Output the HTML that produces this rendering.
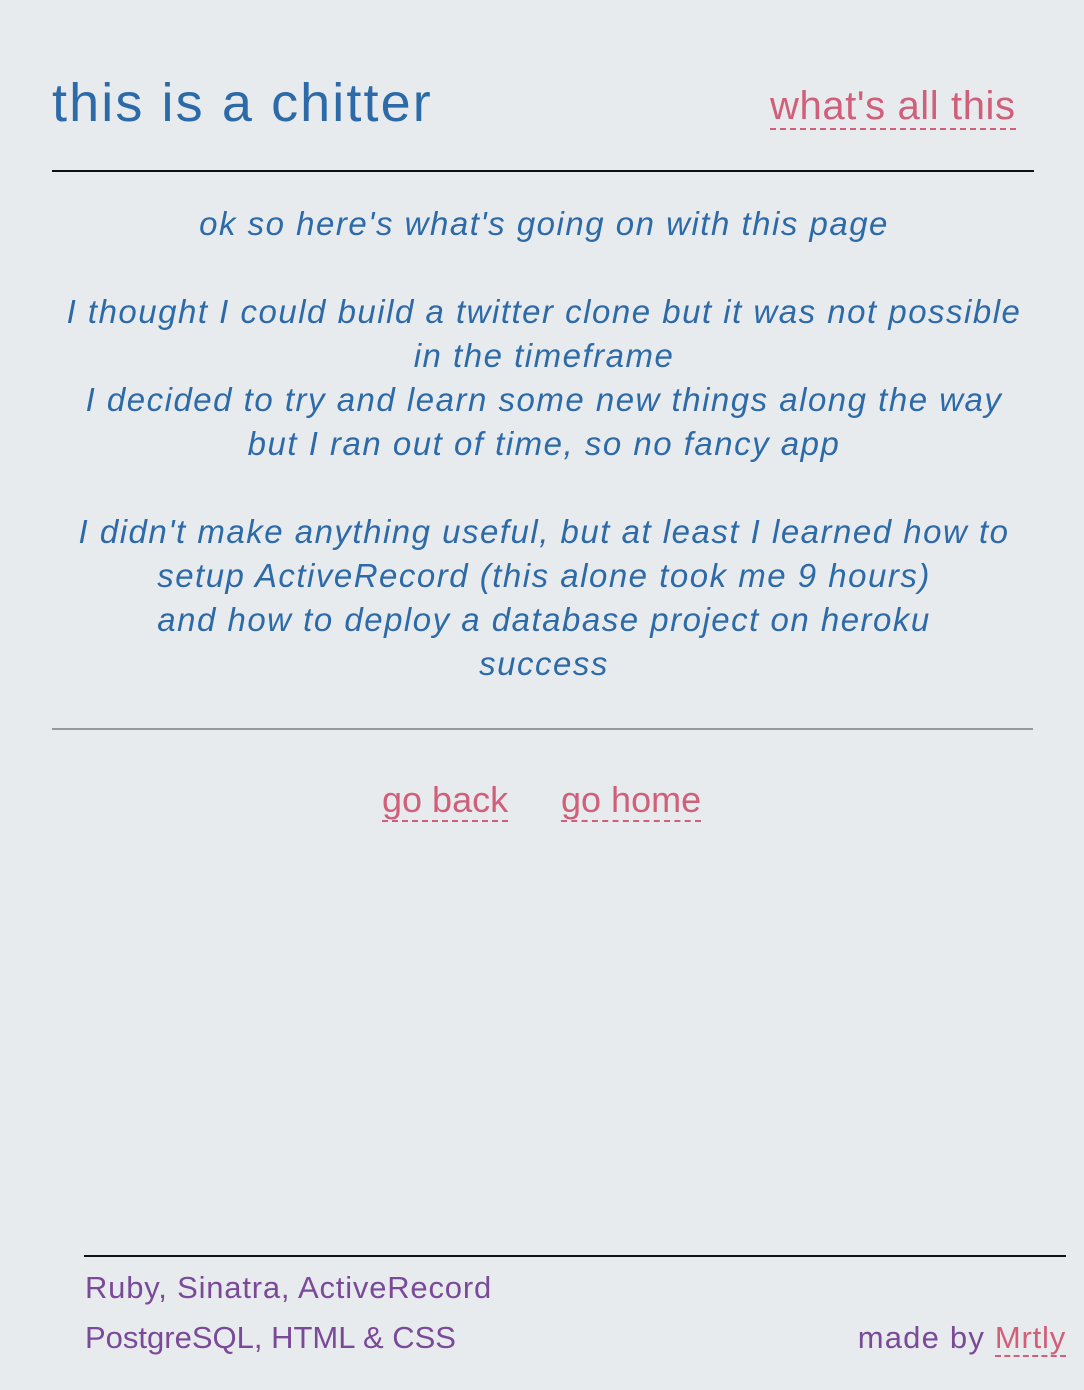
<!DOCTYPE html>
<html><head><meta charset="utf-8"><style>
html,body{margin:0;padding:0;background:#e8ebee;width:1084px;height:1390px;overflow:hidden;font-family:"Liberation Sans",sans-serif}
.a{position:absolute;white-space:nowrap}
.pink{color:#d0607a;border-bottom:2px dashed #d0607a}
.body{position:absolute;left:0px;width:1088px;top:202px;text-align:center;font-style:italic;color:#2d6aa8;font-size:33px;line-height:44px;letter-spacing:1.5px}
</style></head><body>
<div class="a" style="left:52px;top:68px;font-size:54px;color:#2d6aa8;line-height:70px;letter-spacing:2.1px">this is a chitter</div>
<div class="a pink" style="left:770px;top:84px;font-size:40px;line-height:44px;letter-spacing:0.6px">what's all this</div>
<div class="a" style="left:52px;top:170px;width:982px;height:2px;background:#111"></div>
<div class="body">
<div>ok so here's what's going on with this page</div>
<div>&nbsp;</div>
<div>I thought I could build a twitter clone but it was not possible</div>
<div>in the timeframe</div>
<div>I decided to try and learn some new things along the way</div>
<div>but I ran out of time, so no fancy app</div>
<div>&nbsp;</div>
<div>I didn't make anything useful, but at least I learned how to</div>
<div>setup ActiveRecord (this alone took me 9 hours)</div>
<div>and how to deploy a database project on heroku</div>
<div>success</div>
</div>
<div class="a" style="left:52px;top:728px;width:981px;height:2px;background:#999"></div>
<div class="a pink" style="left:382px;top:780px;font-size:36px;line-height:40px">go back</div>
<div class="a pink" style="left:561px;top:780px;font-size:36px;line-height:40px">go home</div>
<div class="a" style="left:84px;top:1255px;width:982px;height:2px;background:#111"></div>
<div class="a" style="left:85px;top:1270px;font-size:31px;line-height:36px;color:#7a4a99;letter-spacing:0.8px">Ruby, Sinatra, ActiveRecord</div>
<div class="a" style="left:85px;top:1320px;font-size:31px;line-height:36px;color:#7a4a99;letter-spacing:0px">PostgreSQL, HTML &amp; CSS</div>
<div class="a" style="right:18px;top:1320px;font-size:31px;line-height:36px;color:#7a4a99;letter-spacing:1.2px">made by <span class="pink" style="letter-spacing:0.8px">Mrtly</span></div>
</body></html>
